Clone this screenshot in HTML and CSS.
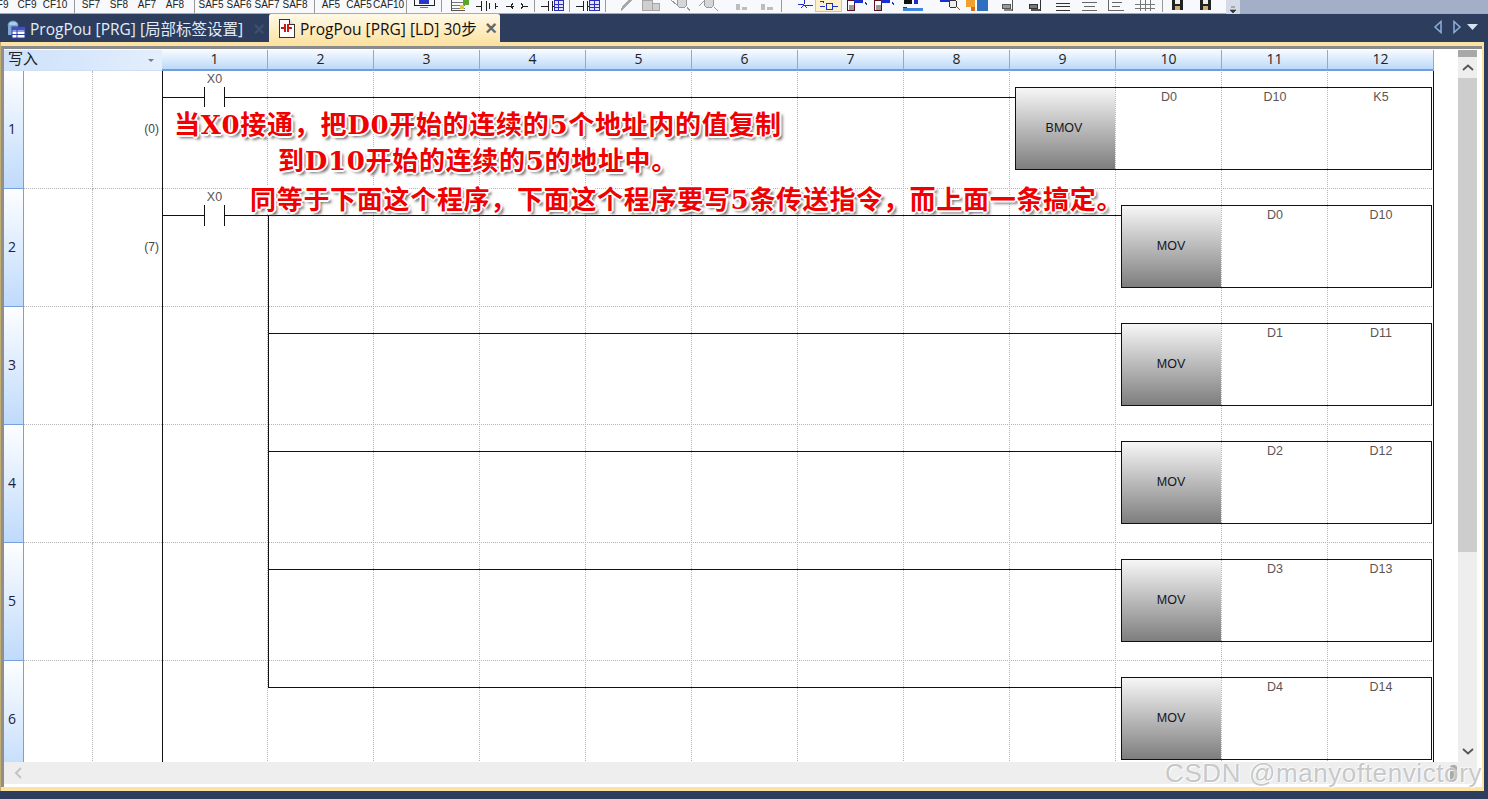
FILE: index.html
```html
<!DOCTYPE html>
<html lang="zh-CN">
<head>
  <meta charset="UTF-8" />
  <title>ProgPou [PRG] [LD]</title>
  <link rel="stylesheet" href="styles.css">
</head>
<body>
<div class="page">

  <div class="toolbar">
    <div class="tools">
      <span class="k k-first">CF9</span><span class="k">CF9</span><span class="k">CF10</span><i class="sep"></i>
      <span class="k">SF7</span><span class="k">SF8</span><span class="k">AF7</span><span class="k">AF8</span><i class="sep"></i>
      <span class="k">SAF5</span><span class="k">SAF6</span><span class="k">SAF7</span><span class="k">SAF8</span><i class="sep"></i>
      <span class="k">AF5</span><span class="k">CAF5</span><span class="k">CAF10</span><i class="sep"></i>
      <svg class="tool-icons" width="817" height="13" viewBox="409 0 817 13" shape-rendering="crispEdges">
        <!-- monitor -->
        <path d="M414 0v5h20V0" fill="none" stroke="#222"/><rect x="419" y="0" width="10" height="4" fill="#2b35c8"/><rect x="420" y="7" width="8" height="1" fill="#777"/>
        <rect x="441" y="0" width="1" height="12" fill="#999"/>
        <!-- list and pen -->
        <path d="M451 2h14M451 5h14M451 8h14" stroke="#777" fill="none"/><path d="M451 0v10h14" stroke="#555" fill="none"/><rect x="463" y="0" width="6" height="5" fill="#5aa62a"/><rect x="460" y="5" width="4" height="4" fill="#e2c93a"/>
        <!-- coil, contact -->
        <path d="M476 6h5M481 1v10M486 1v10M490 3l-1 3 1 3M495 3l1 3-1 3M496 6h2" stroke="#222" fill="none"/>
        <path d="M506 6h8M513 3l-2 3 2 3M521 3l2 3-2 3M522 6h6" stroke="#222" fill="none"/>
        <rect x="534" y="0" width="1" height="12" fill="#999"/>
        <!-- ladder with table -->
        <path d="M541 6h7M548 1v10M552 1v10M552 6h2" stroke="#222" fill="none"/><path d="M554 0h9v10h-9zM554 4h9M554 7h9M558 0v10" stroke="#2d2fb8" fill="#dfe4f8"/>
        <rect x="569" y="0" width="1" height="12" fill="#999"/>
        <path d="M576 6h7M583 1v10M587 1v10M587 6h2" stroke="#222" fill="none"/><path d="M589 0h10v10h-10zM589 4h10M589 7h10M594 0v10" stroke="#2d2fb8" fill="#dfe4f8"/>
        <rect x="605" y="0" width="1" height="12" fill="#999"/>
        <!-- disabled group -->
        <path d="M632 0l-7 7-4 4 1-5 6-6z" fill="#a8a8a8"/>
        <path d="M642 0h10v10h-10zM652 3h7v7h-7z" fill="#cfcfcf" stroke="#a5a5a5"/>
        <circle cx="682" cy="3" r="5" fill="#d6d6d6" stroke="#999"/><path d="M671 0l6 5M687 7l3 4" stroke="#999" fill="none"/>
        <circle cx="709" cy="3" r="5" fill="#d6d6d6" stroke="#999"/><path d="M699 6l6-6M714 7l4 4" stroke="#999" fill="none"/>
        <path d="M736 4h4v6h-4zM742 7h5v3h-5z" fill="#bdbdbd"/><path d="M761 4h4v6h-4zM767 7h6v3h-6z" fill="#bdbdbd"/>
        <rect x="781" y="0" width="1" height="12" fill="#999"/>
        <!-- select tools -->
        <path d="M798 4h6M804 0v4M805 5h8M801 8l3-3 3 3" stroke="#1a2fd0" fill="none"/>
        <rect x="815.500" y="-2" width="26" height="13" fill="#fdf0c9" stroke="#e6c376"/>
        <path d="M820 1h3v2M826 3h6v6h-6zM820 6h5M832 6h6" stroke="#1a2fd0" fill="none"/>
        <rect x="847" y="0" width="7" height="10" fill="#fff" stroke="#5c1020"/><rect x="849" y="5" width="5" height="5" fill="#9a9a9a"/><rect x="854" y="0" width="9" height="3" fill="#1a2fd0"/><path d="M865 2l2 3" stroke="#1a2fd0"/>
        <rect x="874" y="0" width="7" height="10" fill="#fff" stroke="#5c1020"/><rect x="876" y="5" width="5" height="5" fill="#9a9a9a"/><rect x="881" y="0" width="9" height="3" fill="#1a2fd0"/><path d="M892 2l2 3" stroke="#1a2fd0"/>
        <rect x="904" y="0" width="8" height="4" fill="#111"/><rect x="914" y="0" width="4" height="4" fill="#1a2fd0"/><path d="M903 8h20v3h-20z" fill="#3f86e0"/><path d="M903 7h4" stroke="#1a2fd0"/>
        <rect x="940" y="0" width="12" height="2" fill="#1a2fd0"/><circle cx="953" cy="4" r="4" fill="#eee" stroke="#333"/><path d="M957 7l3 3" stroke="#8a5a2a"/>
        <rect x="966" y="0" width="9" height="7" fill="#f0a030"/><rect x="971" y="7" width="4" height="4" fill="#e06a10"/><rect x="977" y="0" width="11" height="11" fill="#2f6fc0"/>
        <!-- align tools -->
        <path d="M1002 4h8v4h-8zM1012 0v11" fill="#999" stroke="#555"/><path d="M1004 9h8v2h-8z" fill="#888"/>
        <path d="M1029 4h8v4h-8zM1040 0v11" fill="#777" stroke="#333"/><path d="M1031 9h9v2h-9z" fill="#555"/>
        <path d="M1056 3h14M1056 6h14M1056 10h14" stroke="#333" fill="none"/>
        <path d="M1082 2h15M1084 6h11M1082 10h15" stroke="#666" fill="none"/>
        <path d="M1108 0v10h16M1112 2h10M1112 6h8" stroke="#666" fill="none"/>
        <path d="M1135 4h20M1135 8h20M1140 0v11M1145 0v11M1150 0v11" stroke="#777" fill="none"/>
        <rect x="1162" y="0" width="1" height="12" fill="#999"/>
        <rect x="1172" y="0" width="11" height="10" fill="#222"/><rect x="1175" y="0" width="5" height="4" fill="#eee"/><rect x="1175" y="6" width="5" height="4" fill="#c9b070"/>
        <rect x="1200" y="0" width="11" height="10" fill="#222"/><rect x="1203" y="0" width="5" height="4" fill="#eee"/><rect x="1203" y="6" width="5" height="4" fill="#c9b070"/>
      </svg>
    </div>
    <div class="overflow-btn"><svg width="8" height="8" viewBox="0 0 8 8"><path d="M2 1h4M1 4h6l-3 3z" fill="#333" stroke="#333" stroke-width=".6"/></svg></div>
    <div class="toolbar-rest"></div>
  </div>

  <div class="tabstrip">
    <div class="tab">
      <svg class="tab-icon" width="20" height="20" viewBox="0 0 20 20">
        <ellipse cx="7" cy="6" rx="5" ry="4" fill="#a9cdea" stroke="#5b83b0"/>
        <rect x="2" y="6" width="10" height="10" fill="#7fa8d2"/>
        <rect x="6" y="8" width="13" height="11" fill="#fff" stroke="#2f3fa8"/>
        <path d="M6 12h13M6 15.500h13M11 8v11" stroke="#2f3fa8"/>
        <rect x="6" y="8" width="13" height="3" fill="#3f52c0"/>
      </svg>
      <span>ProgPou [PRG] [局部标签设置]</span>
      <span class="tab-x tab-x-dim">×</span>
    </div>
    <div class="tab tab-active">
      <svg class="tab-icon" width="18" height="20" viewBox="0 0 18 20" shape-rendering="crispEdges">
        <path d="M1.500 1.500h10l5 5v13h-15z" fill="#fff" stroke="#333"/>
        <path d="M11.500 1.500v5h5" fill="#ddd" stroke="#333"/>
        <rect x="3" y="9" width="3" height="2" fill="#d01818"/><rect x="11" y="9" width="3" height="2" fill="#d01818"/>
        <rect x="6" y="6" width="2" height="8" fill="#d01818"/><rect x="9" y="6" width="2" height="8" fill="#d01818"/>
      </svg>
      <span>ProgPou [PRG] [LD] 30步</span>
      <span class="tab-x">×</span>
    </div>
    <div class="tab-nav">
      <svg width="10" height="14" viewBox="0 0 10 14"><path d="M8 1.500L2 7l6 5.500z" fill="none" stroke="#8fb0d8" stroke-width="1.500"/></svg>
      <svg width="10" height="14" viewBox="0 0 10 14"><path d="M2 1.500L8 7l-6 5.500z" fill="none" stroke="#8fb0d8" stroke-width="1.500"/></svg>
      <svg class="tab-nav-more" width="11" height="7" viewBox="0 0 11 7"><path d="M0 0h11L5.500 6z" fill="#d5e2f2"/></svg>
    </div>
  </div>

  <div class="frame">
    <div class="pane">
      <div class="workarea">
        <div class="sheet">
          <div class="ruler">
            <div class="ruler-mode">
              <span class="mode-name">写入</span>
              <span class="mode-caret"></span>
            </div>
            <div class="col-no">1</div><div class="col-no">2</div><div class="col-no">3</div><div class="col-no">4</div>
            <div class="col-no">5</div><div class="col-no">6</div><div class="col-no">7</div><div class="col-no">8</div>
            <div class="col-no">9</div><div class="col-no">10</div><div class="col-no">11</div><div class="col-no">12</div>
          </div>

          <div class="ladder">
            <div class="rung"><div class="row-no">1</div><div class="gutter"></div><div class="step">(0)</div><div class="cells"></div></div>
            <div class="rung"><div class="row-no">2</div><div class="gutter"></div><div class="step">(7)</div><div class="cells"></div></div>
            <div class="rung"><div class="row-no">3</div><div class="gutter"></div><div class="step"></div><div class="cells"></div></div>
            <div class="rung"><div class="row-no">4</div><div class="gutter"></div><div class="step"></div><div class="cells"></div></div>
            <div class="rung"><div class="row-no">5</div><div class="gutter"></div><div class="step"></div><div class="cells"></div></div>
            <div class="rung"><div class="row-no">6</div><div class="gutter"></div><div class="step"></div><div class="cells"></div></div>

            <!-- ladder drawing, coordinates are the same as the window -->
            <svg class="wires" width="1430" height="691" viewBox="4 71 1430 691">
              <defs>
                <linearGradient id="blockFill" x1="0" y1="0" x2="0" y2="1">
                  <stop offset="0" stop-color="#f8f8f8"/>
                  <stop offset="1" stop-color="#7c7c7c"/>
                </linearGradient>
              </defs>
              <g class="line">
                <path d="M162.500 71v691M1433.500 71v691"/>
                <path d="M162 97.500h42M224 97.500h791M204.500 87v20M224.500 87v20"/>
                <path d="M162 215.500h42M224 215.500h897M204.500 205v21M224.500 205v21"/>
                <path d="M268.500 215v473M268 333.500h853M268 451.500h853M268 569.500h853M268 687.500h853"/>
              </g>
              <rect class="fb-head" x="1015" y="87" width="100" height="83"/>
              <rect class="fb-box" x="1015.500" y="87.500" width="416" height="82"/>
              <g id="movBlocks">
                <rect class="fb-head" x="1121" y="205" width="100" height="83"/><rect class="fb-box" x="1121.500" y="205.500" width="310" height="82"/>
                <rect class="fb-head" x="1121" y="323" width="100" height="83"/><rect class="fb-box" x="1121.500" y="323.500" width="310" height="82"/>
                <rect class="fb-head" x="1121" y="441" width="100" height="83"/><rect class="fb-box" x="1121.500" y="441.500" width="310" height="82"/>
                <rect class="fb-head" x="1121" y="559" width="100" height="83"/><rect class="fb-box" x="1121.500" y="559.500" width="310" height="82"/>
                <rect class="fb-head" x="1121" y="677" width="100" height="83"/><rect class="fb-box" x="1121.500" y="677.500" width="310" height="82"/>
              </g>
              <text class="dev" x="214.500" y="83">X0</text>
              <text class="dev" x="214.500" y="201">X0</text>
              <text class="op" x="1064" y="132">BMOV</text>
              <text class="dev" x="1169" y="101">D0</text><text class="dev" x="1275" y="101">D10</text><text class="dev" x="1381" y="101">K5</text>
              <text class="op" x="1171" y="250">MOV</text><text class="dev" x="1275" y="219">D0</text><text class="dev" x="1381" y="219">D10</text>
              <text class="op" x="1171" y="368">MOV</text><text class="dev" x="1275" y="337">D1</text><text class="dev" x="1381" y="337">D11</text>
              <text class="op" x="1171" y="486">MOV</text><text class="dev" x="1275" y="455">D2</text><text class="dev" x="1381" y="455">D12</text>
              <text class="op" x="1171" y="604">MOV</text><text class="dev" x="1275" y="573">D3</text><text class="dev" x="1381" y="573">D13</text>
              <text class="op" x="1171" y="722">MOV</text><text class="dev" x="1275" y="691">D4</text><text class="dev" x="1381" y="691">D14</text>
            </svg>

            <div class="notes">
              <div class="note note-1">当X0接通&#xFF0C;把D0开始的连续的5个地址内的值复制</div>
              <div class="note note-2">到D10开始的连续的5的地址中。</div>
              <div class="note note-3">同等于下面这个程序&#xFF0C;下面这个程序要写5条传送指令&#xFF0C;而上面一条搞定。</div>
            </div>
          </div>
        </div>

        <div class="vscroll">
          <div class="vscroll-cap"></div>
          <div class="vscroll-up"><svg width="12" height="7" viewBox="0 0 12 7"><path d="M1 6l5-4.500L11 6" fill="none" stroke="#555" stroke-width="1.800"/></svg></div>
          <div class="vscroll-thumb"></div>
          <div class="vscroll-down"><svg width="12" height="7" viewBox="0 0 12 7"><path d="M1 1l5 4.500L11 1" fill="none" stroke="#555" stroke-width="1.800"/></svg></div>
        </div>
      </div>

      <div class="hscroll">
        <svg width="8" height="12" viewBox="0 0 8 12"><path d="M7 1L2 6l5 5" fill="none" stroke="#c4c4c4" stroke-width="2"/></svg>
        <div class="hscroll-grip"></div>
      </div>
    </div>
  </div>

  <div class="watermark">CSDN @manyoftenvictory</div>
</div>
</body>
</html>
```

FILE: styles.css
```css
* {
  box-sizing: border-box;
}

body {
  margin: 0;
  font-family: "Liberation Sans", "Noto Sans CJK SC", sans-serif;
  background-color: #2c3d5e;
}

.page {
  position: relative;
  width: 1488px;
  height: 799px;
  overflow: hidden;
  display: flex;
  flex-direction: column;
}

/* toolbar, only the lower part of it is in the picture */
.toolbar {
  display: flex;
  height: 14px;
  flex: none;
  border-bottom: 1px solid #c9a866;
}

.tools {
  width: 1226px;
  height: 13px;
  display: flex;
  align-items: flex-end;
  overflow: hidden;
  background-color: #f7f9fd;
}

.k {
  flex: none;
  width: 28px;
  height: 16px;
  line-height: 16px;
  font-size: 10px;
  text-align: center;
  color: #222;
  white-space: nowrap;
}

.k-first {
  margin-left: -15px;
}

.sep {
  flex: none;
  width: 1px;
  height: 13px;
  margin: 0 2px 0 5px;
  background-color: #999;
}

.tool-icons {
  flex: none;
  display: block;
}

.overflow-btn {
  width: 14px;
  height: 14px;
  display: flex;
  align-items: flex-end;
  justify-content: center;
  background-color: #d5dbe6;
}

.toolbar-rest {
  flex: 1;
  height: 13px;
  background-color: #a2afc6;
}

/* document tabs */
.tabstrip {
  display: flex;
  align-items: flex-end;
  height: 28px;
  flex: none;
}

.tab {
  width: 269px;
  height: 27px;
  padding-left: 6px;
  display: flex;
  align-items: center;
  font-family: "Open Sans", "Noto Sans CJK SC", sans-serif;
  font-size: 15.5px;
  color: #e4ecf6;
  white-space: nowrap;
}

.tab-icon {
  flex: none;
  margin-right: 4px;
}

.tab-x {
  margin-left: auto;
  margin-right: 3px;
  font-family: "Liberation Sans", sans-serif;
  font-weight: bold;
  font-size: 20px;
  line-height: 20px;
  color: #666;
}

.tab-x-dim {
  margin-right: 4px;
  color: #3e4e6c;
}

.tab-active {
  width: 231px;
  height: 28px;
  padding-left: 9px;
  color: #111;
  border-radius: 2px 2px 0 0;
  background: linear-gradient(#fff9e8, #fde4a6);
}

.tab-nav {
  margin-left: auto;
  width: 62px;
  height: 28px;
  padding-right: 10px;
  padding-bottom: 2px;
  display: flex;
  align-items: center;
  justify-content: flex-end;
  gap: 9px;
}

.tab-nav-more {
  margin-left: -4px;
}

/* editor window */
.frame {
  flex: none;
  width: 1484px;
  height: 749px;
  padding: 4px 2px 4px 0;
  border-left: 1px solid #c2ae72;
  background-color: #fde3a3;
}

.pane {
  height: 741px;
  padding-top: 1px;
  border-top: 3px solid #8b8b8b;
  border-left: 3px solid #8f8f8f;
  background-color: #fff;
}

.workarea {
  display: flex;
  height: 712px;
}

.sheet {
  width: 1430px;
  flex: none;
}

.ruler {
  display: grid;
  grid-template-columns: 158px repeat(12, 106px);
  grid-template-rows: 21px;
  height: 21px;
}

.ruler-mode {
  position: relative;
  display: flex;
  align-items: center;
  padding: 0 0 2px 4px;
  line-height: 16px;
  border-bottom: 1px solid #cfe0f6;
  background: linear-gradient(90deg, #cfe2fa, #d9e8fb 58%, #e4effc);
}

.mode-name {
  font-size: 15px;
  color: #222;
}

.mode-caret {
  position: absolute;
  left: 144px;
  top: 9px;
  border-left: 3px solid transparent;
  border-right: 3px solid transparent;
  border-top: 3px solid #6a7a90;
}

.col-no {
  display: flex;
  align-items: center;
  justify-content: center;
  line-height: 16px;
  padding-bottom: 1px;
  font-family: "Open Sans", sans-serif;
  font-size: 14px;
  color: #222;
  border-right: 1px solid #86abe2;
  border-bottom: 2px solid #6f9de0;
  background: linear-gradient(#f7fbff, #bcd9f9);
}

.ladder {
  position: relative;
  height: 691px;
  overflow: hidden;
}

.rung {
  display: grid;
  grid-template-columns: 20px 69px 69px 1272px;
  height: 118px;
}

.row-no {
  display: flex;
  align-items: center;
  padding: 0 0 2px 4px;
  font-family: "Open Sans", sans-serif;
  font-size: 14px;
  color: #223;
  border-right: 1px solid #76a0e0;
  border-bottom: 1px solid #76a0e0;
  background: linear-gradient(#fdfeff, #bfdafb);
}

.gutter {
  border-right: 1px dotted #b4b4b4;
  border-bottom: 1px dotted #b4b4b4;
}

.step {
  display: flex;
  align-items: center;
  justify-content: flex-end;
  padding-right: 3px;
  padding-bottom: 2px;
  font-size: 12px;
  color: #444;
  border-bottom: 1px dotted #b4b4b4;
}

/* dotted column lines, every 106px */
.cells {
  border-bottom: 1px dotted #b4b4b4;
  background-image:
    linear-gradient(#fff 1px, transparent 1px),
    linear-gradient(90deg, transparent 105px, #b4b4b4 105px);
  background-size: 106px 2px;
}

.wires {
  position: absolute;
  left: 0;
  top: 0;
}

.line {
  fill: none;
  stroke: #111;
  stroke-width: 1;
  shape-rendering: crispEdges;
}

.fb-head {
  fill: url(#blockFill);
}

.fb-box {
  fill: none;
  stroke: #111;
  stroke-width: 1;
  shape-rendering: crispEdges;
}

.dev {
  font-size: 12.500px;
  text-anchor: middle;
  fill: #5d5555;
}

.op {
  font-size: 12.500px;
  text-anchor: middle;
  fill: #15151f;
}

/* red remarks written over the program */
.notes {
  position: absolute;
  left: 170px;
  top: 38px;
}

.note {
  font-family: "DejaVu Serif", "Noto Sans CJK SC", serif;
  font-weight: bold;
  font-size: 26px;
  line-height: 32px;
  height: 32px;
  letter-spacing: 0.7px;
  color: #f00000;
  white-space: nowrap;
  text-shadow:
    -2px 0 0 #fff, 2px 0 0 #fff, 0 -2px 0 #fff, 0 2px 0 #fff,
    -1px -1px 0 #fff, 1px -1px 0 #fff, -1px 1px 0 #fff, 1px 1px 0 #fff,
    3px 3px 3px #666;
}

.note-2 {
  margin-left: 104px;
  margin-top: 4px;
}

.note-3 {
  margin-left: 76px;
  margin-top: 7px;
}

/* scrollbars */
.vscroll {
  width: 19px;
  margin-left: 24px;
  position: relative;
  background-color: #eeeeee;
}

.vscroll-cap {
  height: 7px;
  background-color: #a8a8a8;
}

.vscroll-up,
.vscroll-down {
  display: flex;
  justify-content: center;
  align-items: center;
}

.vscroll-up {
  height: 21px;
}

.vscroll-thumb {
  height: 474px;
  background-color: #cdcdcd;
}

.vscroll-down {
  position: absolute;
  left: 0;
  right: 0;
  bottom: 0;
  height: 22px;
}

.hscroll {
  width: 1473px;
  height: 22px;
  padding: 0 0 0 10px;
  display: flex;
  align-items: center;
  justify-content: space-between;
  background-color: #eeeeee;
}

.hscroll-grip {
  width: 7px;
  height: 17px;
  margin-right: 20px;
  border-radius: 3px;
  background-color: #a9a9a9;
}

.watermark {
  position: absolute;
  left: 1165px;
  top: 757px;
  font-size: 26px;
  line-height: 32px;
  white-space: nowrap;
  letter-spacing: 0.6px;
  color: rgba(170, 170, 170, 0.65);
  text-shadow: 1px 1px 1px rgba(255, 255, 255, 0.9), -1px -1px 0 rgba(255, 255, 255, 0.6);
}
```
